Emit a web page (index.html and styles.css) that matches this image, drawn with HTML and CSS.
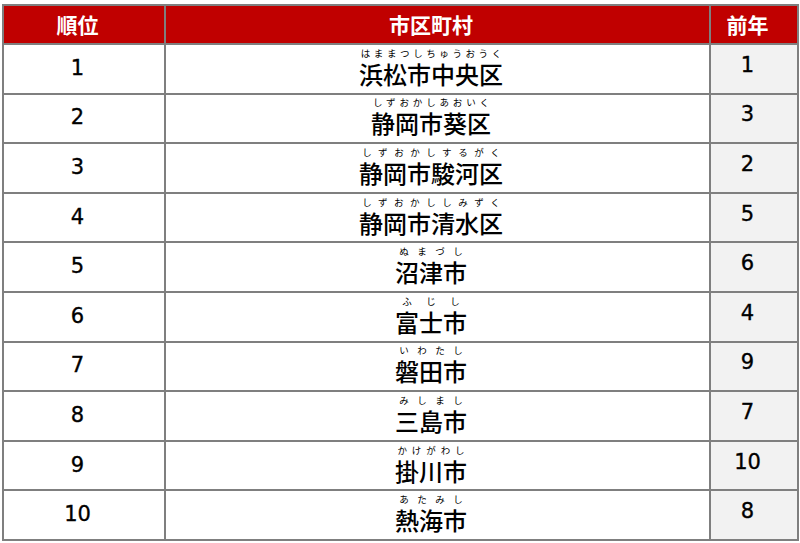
FILE: index.html
```html
<!DOCTYPE html>
<html lang="ja">
<head>
<meta charset="utf-8">
<link rel="stylesheet" href="styles.css">
</head>
<body>
<table class="rank">
  <colgroup><col class="c1"><col class="c2"><col class="c3"></colgroup>
  <thead>
    <tr class="head"><th>順位</th><th>市区町村</th><th>前年</th></tr>
  </thead>
  <tbody>
    <tr><td class="num">1</td><td class="city"><ruby>浜松市中央区<rt>はままつしちゅうおうく</rt></ruby></td><td class="prev">1</td></tr>
    <tr><td class="num">2</td><td class="city"><ruby>静岡市葵区<rt>しずおかしあおいく</rt></ruby></td><td class="prev">3</td></tr>
    <tr><td class="num">3</td><td class="city"><ruby>静岡市駿河区<rt>しずおかしするがく</rt></ruby></td><td class="prev">2</td></tr>
    <tr><td class="num">4</td><td class="city"><ruby>静岡市清水区<rt>しずおかししみずく</rt></ruby></td><td class="prev">5</td></tr>
    <tr><td class="num">5</td><td class="city"><ruby>沼津市<rt>ぬまづし</rt></ruby></td><td class="prev">6</td></tr>
    <tr><td class="num">6</td><td class="city"><ruby>富士市<rt>ふじし</rt></ruby></td><td class="prev">4</td></tr>
    <tr><td class="num">7</td><td class="city"><ruby>磐田市<rt>いわたし</rt></ruby></td><td class="prev">9</td></tr>
    <tr><td class="num">8</td><td class="city"><ruby>三島市<rt>みしまし</rt></ruby></td><td class="prev">7</td></tr>
    <tr><td class="num">9</td><td class="city"><ruby>掛川市<rt>かけがわし</rt></ruby></td><td class="prev">10</td></tr>
    <tr><td class="num">10</td><td class="city"><ruby>熱海市<rt>あたみし</rt></ruby></td><td class="prev">8</td></tr>
  </tbody>
</table>
</body>
</html>
```
FILE: styles.css
```css
html, body {
  margin: 0;
  padding: 0;
  background: #ffffff;
}
body {
  padding: 4px 0 0 2px;
  font-family: "Noto Sans CJK JP", "DejaVu Sans", sans-serif;
  color: #000;
}
.rank {
  border-collapse: collapse;
  table-layout: fixed;
  width: 795px;
}
.c1 { width: 162px; }
.c2 { width: 545px; }
.c3 { width: 88px; }
.rank tr {
  height: 49.6px;
}
.rank tr.head {
  height: 39px;
}
.rank th,
.rank td {
  box-sizing: border-box;
  border: 2px solid #7f7f7f;
  padding: 0 13px 0 0;
  text-align: center;
  vertical-align: middle;
}
.rank th {
  background: #c00000;
  color: #ffffff;
  font-size: 21px;
  font-weight: 700;
  line-height: 24px;
  padding-bottom: 2px;
}
.num,
.prev {
  font-family: "DejaVu Sans", sans-serif;
  font-size: 21px;
  line-height: 24px;
  -webkit-text-stroke: 0.35px #000;
}
.rank td.num {
  padding-bottom: 2px;
}
.rank td.prev {
  background: #f2f2f2;
  padding-bottom: 8px;
}
.city {
  font-size: 24px;
  font-weight: 500;
  line-height: 26px;
}
.rank td.city {
  padding-top: 4px;
}
.city ruby {
  ruby-position: over;
}
.city rt {
  font-size: 9.5px;
  font-weight: 400;
  line-height: 11px;
  position: relative;
  top: -3px;
}
```
